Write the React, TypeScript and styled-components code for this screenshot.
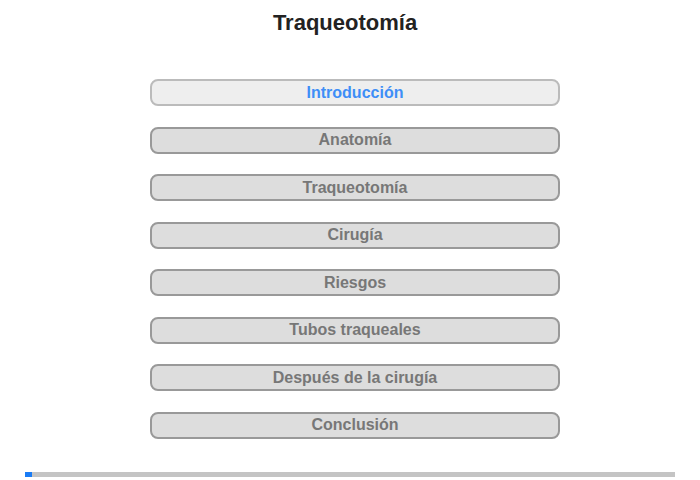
import React from "react";
import styled, { createGlobalStyle } from "styled-components";

const Global = createGlobalStyle`
  html, body { margin: 0; padding: 0; background: #fff; }
  body { font-family: "Liberation Sans", Arial, sans-serif; }
`;

const Page = styled.div`
  width: 700px;
  height: 480px;
  display: flex;
  flex-direction: column;
  box-sizing: border-box;
`;

const Title = styled.h1`
  margin: 10px 0 0 -10px;
  height: 26px;
  font-size: 22px;
  line-height: 26px;
  font-weight: bold;
  color: #222;
  text-align: center;
`;

const Menu = styled.nav`
  margin: 43px 0 0 150px;
  width: 410px;
  display: flex;
  flex-direction: column;
  gap: 20.5px;
`;

const Item = styled.div<{ $active?: boolean }>`
  box-sizing: border-box;
  height: 27px;
  border: 2px solid ${(p) => (p.$active ? "#bbbbbb" : "#999999")};
  border-radius: 8px;
  background: ${(p) => (p.$active ? "#eeeeee" : "#dddddd")};
  color: ${(p) => (p.$active ? "#3e8ef7" : "#777777")};
  font-size: 16px;
  font-weight: bold;
  display: flex;
  align-items: center;
  justify-content: center;
`;

const Progress = styled.div`
  margin: auto 25px 3px 25px;
  height: 5px;
  background: #c4c4c4;
  display: flex;
`;

const Fill = styled.div`
  height: 100%;
  background: #1a7cf5;
`;

const items = [
  "Introducción",
  "Anatomía",
  "Traqueotomía",
  "Cirugía",
  "Riesgos",
  "Tubos traqueales",
  "Después de la cirugía",
  "Conclusión",
];

export default function App() {
  return (
    <>
      <Global />
      <Page>
        <Title>Traqueotomía</Title>
        <Menu>
          {items.map((t, i) => (
            <Item key={t} $active={i === 0}>
              {t}
            </Item>
          ))}
        </Menu>
        <Progress>
          <Fill style={{ width: `${(1 / 8) * 8.6}%` }} />
        </Progress>
      </Page>
    </>
  );
}
